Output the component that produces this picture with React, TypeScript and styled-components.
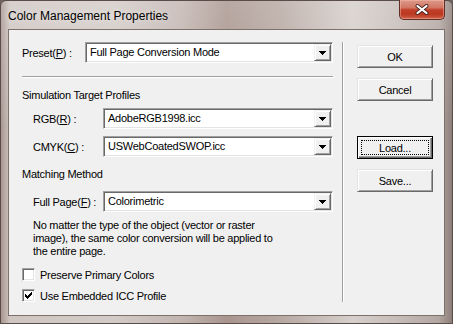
import React from "react";
import styled, { createGlobalStyle } from "styled-components";

const GlobalStyle = createGlobalStyle`
  html, body {
    margin: 0;
    padding: 0;
    background: #6e6360;
  }
  body {
    font-family: "Liberation Sans", Arial, sans-serif;
  }
`;

const Window = styled.div`
  width: 453px;
  height: 324px;
  box-sizing: border-box;
  display: flex;
  flex-direction: column;
  padding: 0 7px 7px;
  border: 1px solid #5a4d49;
  border-radius: 6px 6px 0 0;
  background:
    linear-gradient(180deg, rgba(255, 255, 255, 0.18) 0%, rgba(255, 255, 255, 0) 40%),
    linear-gradient(
      90deg,
      #a89690 0%,
      #cfc6c2 2%,
      #d3cbc7 25%,
      #c2b5b0 40%,
      #a9958e 50%,
      #b7a8a2 62%,
      #d6cfcb 78%,
      #c6bcb8 88%,
      #b3a7a2 97%,
      #8d7e79 100%
    );
`;

const TitleBar = styled.div`
  height: 28px;
  display: flex;
  align-items: flex-start;
  justify-content: space-between;
`;

const Title = styled.div`
  padding-top: 8px;
  font-size: 12px;
  line-height: 14px;
  color: #000;
  text-shadow: 0 0 6px rgba(255, 255, 255, 0.7);
`;

const CloseButton = styled.div`
  width: 46px;
  height: 20px;
  margin-top: -1px;
  box-sizing: border-box;
  display: flex;
  align-items: center;
  justify-content: center;
  border: 1px solid #5e2e27;
  border-top: none;
  border-radius: 0 0 5px 5px;
  background: linear-gradient(
    180deg,
    #dc9a8b 0%,
    #d27763 40%,
    #c1402a 52%,
    #bb3820 75%,
    #cf6249 100%
  );
  box-shadow: inset 0 0 0 1px rgba(255, 190, 175, 0.45);
`;

const Client = styled.div`
  flex: 1;
  display: flex;
  padding: 12px 0 0 13px;
  background: #f0f0f0;
  border: 1px solid #7d716d;
  font-size: 11px;
  letter-spacing: -0.25px;
  color: #000;
`;

const LeftPane = styled.div`
  width: 311px;
  display: flex;
  flex-direction: column;
`;

const Row = styled.div<{ $top?: number; $indent?: number }>`
  display: flex;
  align-items: center;
  height: 21px;
  margin-top: ${(p) => p.$top ?? 0}px;
  padding-left: ${(p) => p.$indent ?? 0}px;
`;

const Label = styled.span<{ $width: number }>`
  width: ${(p) => p.$width}px;
  flex-shrink: 0;
  white-space: nowrap;
`;

const Combo = styled.div<{ $width: number }>`
  width: ${(p) => p.$width}px;
  height: 21px;
  box-sizing: border-box;
  display: flex;
  padding: 1px;
  background: #fff;
  border: 1px solid;
  border-color: #a0a0a0 #fff #fff #a0a0a0;
  box-shadow: inset 1px 1px 0 #696969, inset -1px -1px 0 #e3e3e3;
`;

const ComboText = styled.span`
  flex: 1;
  padding-left: 3px;
  line-height: 17px;
  white-space: nowrap;
  overflow: hidden;
`;

const DropButton = styled.span`
  width: 17px;
  box-sizing: border-box;
  display: flex;
  align-items: center;
  justify-content: center;
  background: #f0f0f0;
  border: 1px solid;
  border-color: #f0f0f0 #696969 #696969 #f0f0f0;
  box-shadow: inset 1px 1px 0 #fff, inset -1px -1px 0 #a0a0a0;
`;

const Rule = styled.div`
  margin-top: 13px;
  height: 0;
  border-top: 1px solid #a0a0a0;
  border-bottom: 1px solid #fff;
`;

const Heading = styled.div<{ $top: number }>`
  margin-top: ${(p) => p.$top}px;
  line-height: 13px;
`;

const Note = styled.p`
  margin: 7px 0 0;
  padding-left: 11px;
  line-height: 13px;
`;

const CheckRow = styled.label<{ $top: number }>`
  display: flex;
  align-items: center;
  gap: 5px;
  height: 13px;
  margin-top: ${(p) => p.$top}px;
`;

const CheckBox = styled.span`
  width: 13px;
  height: 13px;
  box-sizing: border-box;
  display: flex;
  align-items: center;
  justify-content: center;
  background: #fff;
  border: 1px solid;
  border-color: #a0a0a0 #fff #fff #a0a0a0;
  box-shadow: inset 1px 1px 0 #696969, inset -1px -1px 0 #e3e3e3;
`;

const Divider = styled.div`
  width: 0;
  height: 260px;
  margin-left: 9px;
  border-left: 1px solid #a0a0a0;
  border-right: 1px solid #fff;
`;

const ButtonColumn = styled.div`
  display: flex;
  flex-direction: column;
  gap: 10px;
  margin-left: 13px;
  padding-top: 3px;
`;

const Button = styled.div<{ $focused?: boolean; $top?: number }>`
  position: relative;
  width: 76px;
  height: 23px;
  box-sizing: border-box;
  display: flex;
  align-items: center;
  justify-content: center;
  margin-top: ${(p) => p.$top ?? 0}px;
  background: #f0f0f0;
  border: 1px solid;
  border-color: ${(p) =>
    p.$focused ? "#000" : "#e3e3e3 #696969 #696969 #e3e3e3"};
  box-shadow: ${(p) =>
    p.$focused
      ? "inset 1px 1px 0 #fff, inset -1px -1px 0 #696969, inset -2px -2px 0 #a0a0a0"
      : "inset 1px 1px 0 #fff, inset -1px -1px 0 #a0a0a0"};

  &::after {
    content: "";
    display: ${(p) => (p.$focused ? "block" : "none")};
    position: absolute;
    inset: 3px;
    border: 1px dotted #000;
  }
`;

const Arrow = () => (
  <svg width="7" height="4" viewBox="0 0 7 4" shapeRendering="crispEdges">
    <path d="M0 0h7v1h-1v1h-1v1h-1v1h-1v-1h-1v-1h-1v-1h-1z" fill="#000" />
  </svg>
);

const Check = () => (
  <svg width="7" height="7" viewBox="0 0 7 7" shapeRendering="crispEdges">
    <path d="M0 2h1v1h1v1h1v-1h1v-1h1v-1h1v-1h1v3h-1v1h-1v1h-1v1h-1v1h-1v-1h-1v-1h-1z" fill="#000" />
  </svg>
);

const CloseGlyph = () => (
  <svg width="14" height="11" viewBox="0 0 14 11">
    <path d="M2.5 2 L11.5 9 M11.5 2 L2.5 9" stroke="#4a2420" strokeWidth="4" strokeLinecap="round" />
    <path d="M2.5 2 L11.5 9 M11.5 2 L2.5 9" stroke="#fff" strokeWidth="2.2" strokeLinecap="round" />
  </svg>
);

function ComboBox({ value, width }: { value: string; width: number }) {
  return (
    <Combo $width={width}>
      <ComboText>{value}</ComboText>
      <DropButton>
        <Arrow />
      </DropButton>
    </Combo>
  );
}

export default function App() {
  return (
    <>
      <GlobalStyle />
      <Window>
        <TitleBar>
          <Title>Color Management Properties</Title>
          <CloseButton>
            <CloseGlyph />
          </CloseButton>
        </TitleBar>
        <Client>
          <LeftPane>
            <Row>
              <Label $width={63}>
                Preset(<u>P</u>) :
              </Label>
              <ComboBox value="Full Page Conversion Mode" width={248} />
            </Row>
            <Rule />
            <Heading $top={11}>Simulation Target Profiles</Heading>
            <Row $top={6} $indent={11}>
              <Label $width={70}>
                RGB(<u>R</u>) :
              </Label>
              <ComboBox value="AdobeRGB1998.icc" width={230} />
            </Row>
            <Row $top={7} $indent={11}>
              <Label $width={70}>
                CMYK(<u>C</u>) :
              </Label>
              <ComboBox value="USWebCoatedSWOP.icc" width={230} />
            </Row>
            <Heading $top={11}>Matching Method</Heading>
            <Row $top={10} $indent={11}>
              <Label $width={70}>
                Full Page(<u>F</u>) :
              </Label>
              <ComboBox value="Colorimetric" width={230} />
            </Row>
            <Note>
              No matter the type of the object (vector or raster
              <br />
              image), the same color conversion will be applied to
              <br />
              the entire page.
            </Note>
            <CheckRow $top={10}>
              <CheckBox />
              Preserve Primary Colors
            </CheckRow>
            <CheckRow $top={8}>
              <CheckBox>
                <Check />
              </CheckBox>
              Use Embedded ICC Profile
            </CheckRow>
          </LeftPane>
          <Divider />
          <ButtonColumn>
            <Button>OK</Button>
            <Button>Cancel</Button>
            <Button $focused $top={25}>
              Load...
            </Button>
            <Button>Save...</Button>
          </ButtonColumn>
        </Client>
      </Window>
    </>
  );
}
